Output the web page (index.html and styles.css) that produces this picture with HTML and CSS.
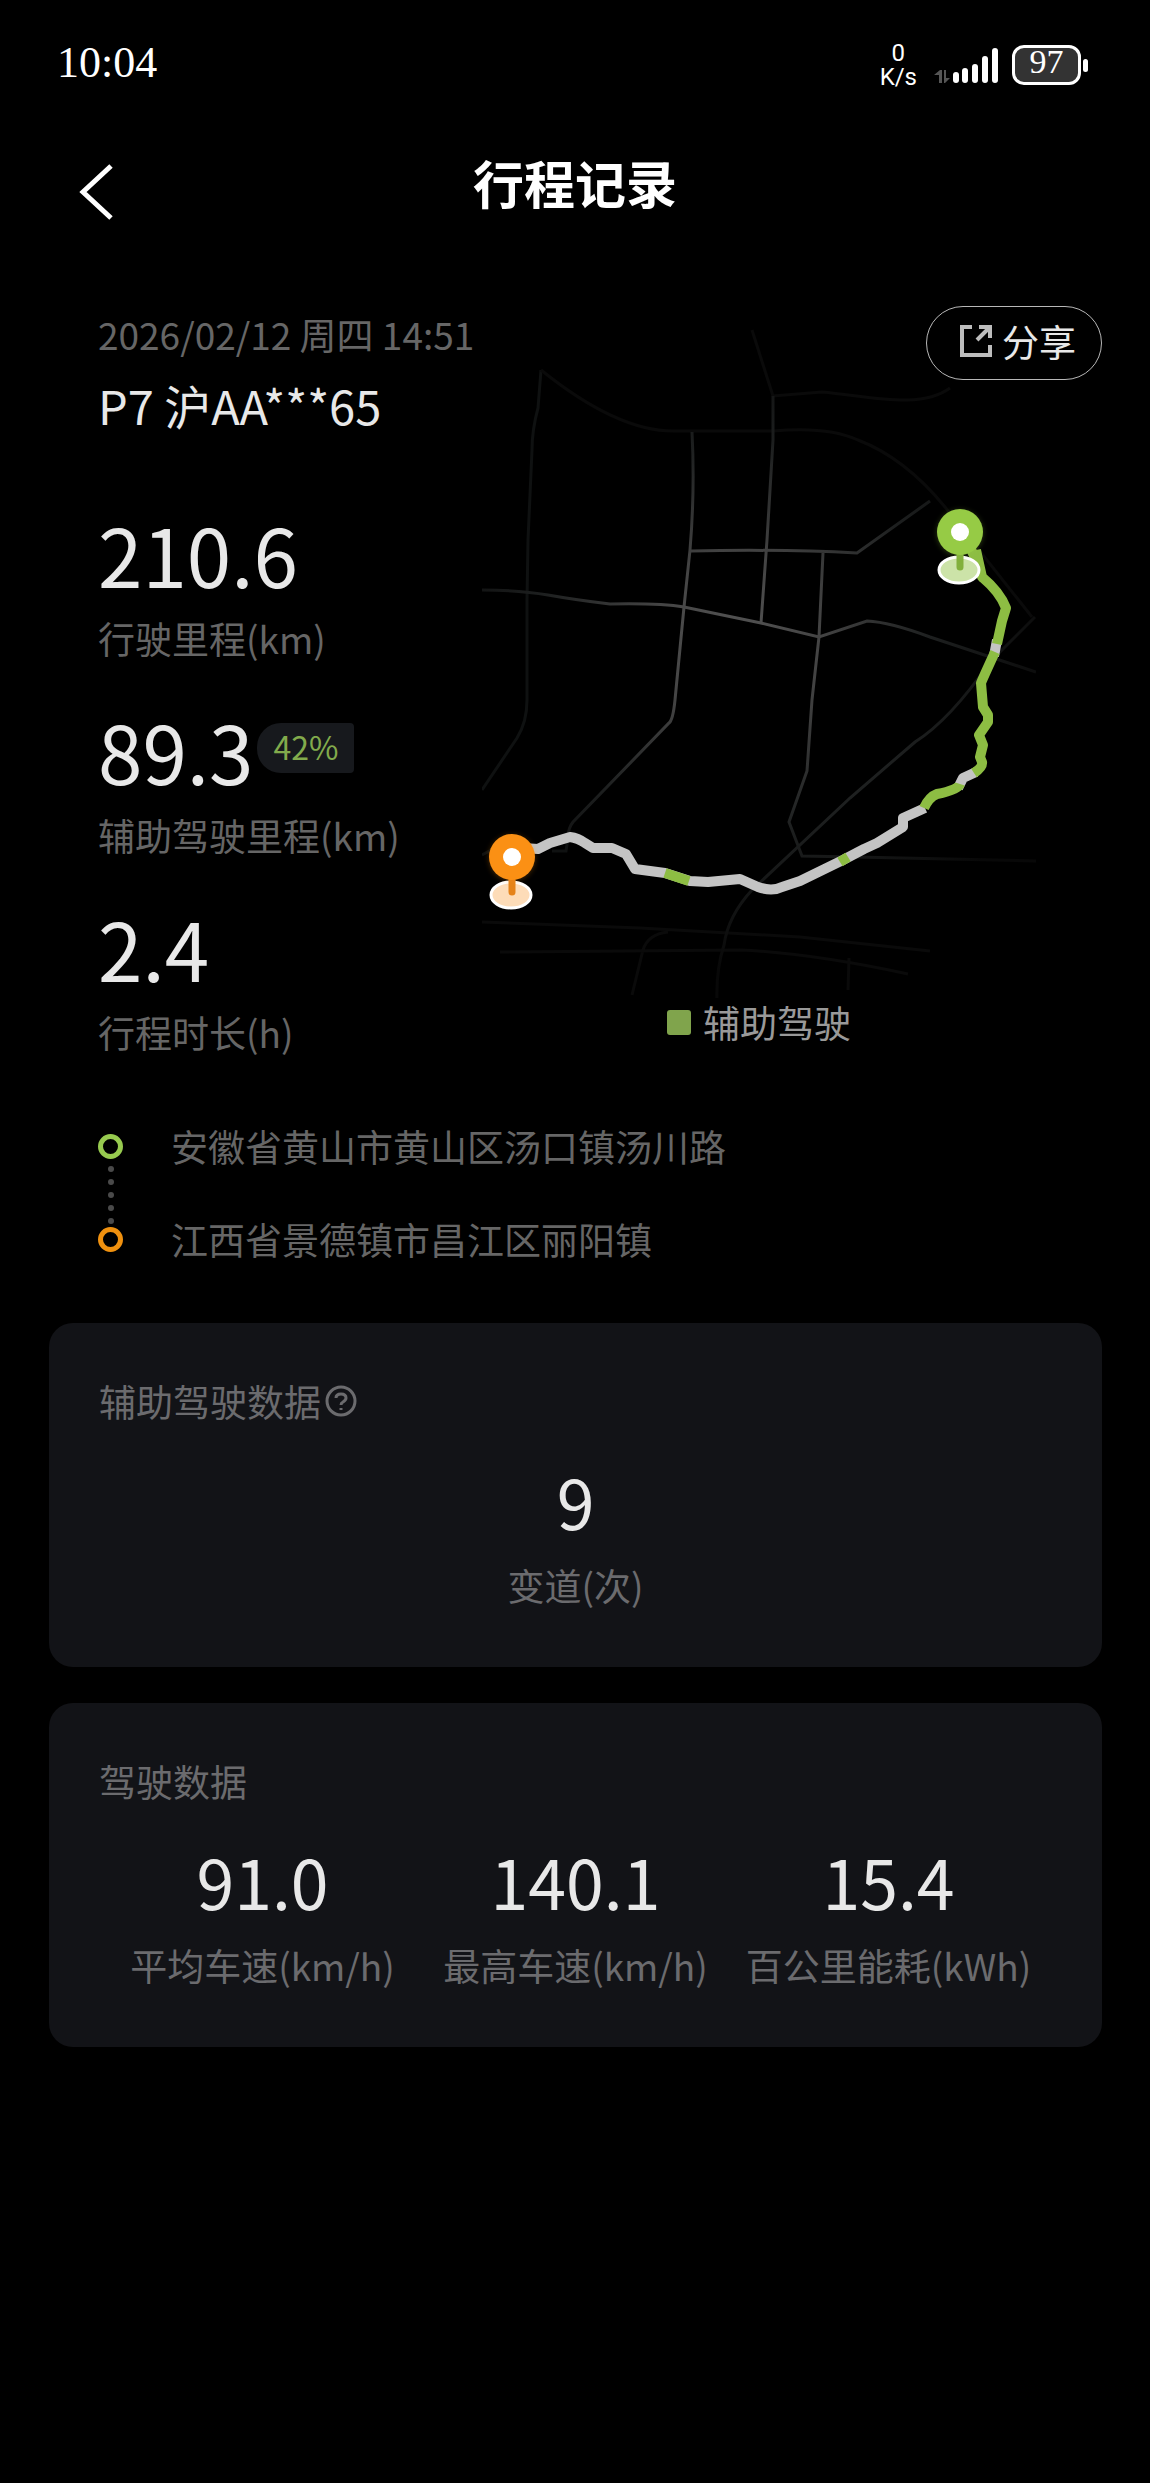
FILE: index.html
```html
<!DOCTYPE html>
<html lang="zh-CN">
<head>
<meta charset="utf-8">
<meta name="viewport" content="width=device-width, initial-scale=1">
<title>行程记录</title>
<link rel="stylesheet" href="styles.css">
</head>
<body>
<div class="statusbar">
  <time class="clock">10:04</time>
  <div class="indicators">
    <div class="speed"><span>0</span><span>K/s</span></div>
    <svg class="signal" viewBox="0 0 66 38" aria-hidden="true">
      <path class="arrows" d="M6 37V29H1L7 24H9V37ZM11 24H13V32H17L12 37H11Z"/>
      <g class="bars">
        <rect x="20" y="26" width="6" height="11" rx="3"/>
        <rect x="29" y="22" width="6" height="15" rx="3"/>
        <rect x="39" y="18" width="6" height="19" rx="3"/>
        <rect x="49" y="10" width="6" height="27" rx="3"/>
        <rect x="59" y="2" width="6" height="35" rx="3"/>
      </g>
    </svg>
    <div class="battery"><span class="level">97</span><span class="nub"></span></div>
  </div>
</div>

<header class="navbar">
  <button class="back" type="button" aria-label="返回">
    <svg viewBox="0 0 36 56" aria-hidden="true"><path d="M33 2L5 28L33 54"/></svg>
  </button>
  <h1>行程记录</h1>
</header>

<main>
  <section class="trip">
    <button class="share" type="button">
      <svg viewBox="0 0 34 34" aria-hidden="true"><path d="M13 3H3V31H31V21M20 3H31V14M31 3L18 16"/></svg>
      <span>分享</span>
    </button>
    <div class="summary">
      <p class="date">2026/02/12 周四 14:51</p>
      <p class="car">P7 沪AA***65</p>
      <dl class="metrics">
        <div class="metric"><dd>210.6</dd><dt>行驶里程(km)</dt></div>
        <div class="metric"><dd>89.3<span class="share-rate">42%</span></dd><dt>辅助驾驶里程(km)</dt></div>
        <div class="metric"><dd>2.4</dd><dt>行程时长(h)</dt></div>
      </dl>
    </div>
    <figure class="map">
      <svg viewBox="482 312 554 686" role="img" aria-label="行程路线">
        <defs>
          <radialGradient id="fade" gradientUnits="userSpaceOnUse" cx="735" cy="640" r="330">
            <stop offset="0" stop-color="#545454"/>
            <stop offset="0.25" stop-color="#444"/>
            <stop offset="0.6" stop-color="#1d1f1f"/>
            <stop offset="1" stop-color="#080808"/>
          </radialGradient>
          <filter id="glow" x="-50%" y="-50%" width="200%" height="200%"><feGaussianBlur stdDeviation="3"/></filter>
        </defs>
        <g class="roads minor">
          <path class="west" d="M541 370L538 408Q532 430 532 450L528 540L527 600V700Q527 722 517 738L482 790"/>
          <path d="M541 370Q618 432 675 431L773 431Q828 426 858 440Q905 458 945 507L1032 617"/>
          <path d="M752 330L773 396L822 392C870 396 920 410 950 388"/>
          <path d="M482 922L640 928L800 937L930 951M500 952L740 950Q810 953 908 974M632 995L643 950Q648 934 668 932M849 958L848 990"/>
          <path class="west" d="M482 855L495 848M552 851H566L568 838"/>
        </g>
        <g class="roads">
          <path d="M692 432Q695 490 690 550L684 607L675 700Q673 720 669 723L573 822Q568 828 568 838"/>
          <path d="M691 551Q780 549 857 553L930 501"/>
          <path d="M773 396V440L767 540L761 623"/>
          <path d="M482 590Q520 590 548 595T610 604Q660 603 684 607L761 623L819 637L867 621Q890 622 930 637L1036 672"/>
          <path d="M823 553L819 637L812 700L807 771L789 822L802 856L855 857L1036 861"/>
          <path d="M1035 617L990 662Q950 720 915 742L850 798L752 890Q728 916 724 945Q716 970 717 1000"/>
        </g>
        <g class="route">
          <path class="manual" d="M523 848L538 849L550 843L570 837Q578 838 585 843L593 848H612L626 854L635 869L665 873L690 881L708 882L740 879L758 887Q772 892 782 887L800 881L843 860L864 849L877 843L903 827V818L925 808M958 788L963 778L976 772M997 640L994 656"/>
          <path class="assist" d="M665 873L689 881M840 862L848 857M924 808Q929 797 937 794Q958 790 960 784M974 773Q983 767 982 762L980 757L983 745L979 735L988 722V715L983 707L981 683Q983 678 995 652M997 644L1002 621L1006 608Q1000 592 982 577L976 550"/>
          <path class="assist wedge" d="M966 550L975 546Q984 565 986 580L980 582Z"/>
        </g>
        <g class="pin start">
          <ellipse class="base" cx="959" cy="570" rx="20" ry="13"/>
          <path class="stem" d="M960 550V567"/>
          <circle class="halo" cx="960" cy="533" r="22" filter="url(#glow)"/>
          <circle class="head" cx="960" cy="532" r="23"/>
          <circle class="eye" cx="960" cy="532" r="9"/>
        </g>
        <g class="pin end">
          <ellipse class="base" cx="511" cy="895" rx="20" ry="13"/>
          <path class="stem" d="M512 875V892"/>
          <circle class="halo" cx="512" cy="858" r="22" filter="url(#glow)"/>
          <circle class="head" cx="512" cy="857" r="23"/>
          <circle class="eye" cx="512" cy="857" r="9"/>
        </g>
      </svg>
      <figcaption>辅助驾驶</figcaption>
    </figure>
  </section>

  <ul class="places">
    <li class="from">安徽省黄山市黄山区汤口镇汤川路</li>
    <li class="dots" aria-hidden="true"><i></i><i></i><i></i><i></i><i></i></li>
    <li class="to">江西省景德镇市昌江区丽阳镇</li>
  </ul>

  <section class="card">
    <h2>辅助驾驶数据
      <button class="help" type="button" aria-label="说明">
        <svg viewBox="0 0 32 32" aria-hidden="true"><circle cx="16" cy="16" r="14"/><path d="M11 13Q11 9 16 9T21 13Q21 15 18 17Q16 18 16 20"/><path d="M16 23V25"/></svg>
      </button>
    </h2>
    <dl class="stats">
      <div><dd>9</dd><dt>变道(次)</dt></div>
    </dl>
  </section>

  <section class="card">
    <h2>驾驶数据</h2>
    <dl class="stats">
      <div><dd>91.0</dd><dt>平均车速(km/h)</dt></div>
      <div><dd>140.1</dd><dt>最高车速(km/h)</dt></div>
      <div><dd>15.4</dd><dt>百公里能耗(kWh)</dt></div>
    </dl>
  </section>
</main>
</body>
</html>
```
FILE: styles.css
```css
*, *::before { box-sizing: border-box; }

body {
  margin: 0;
  min-height: 100vh;
  background: #000;
  color: #e8e8e8;
  font: 400 37px/48px "Noto Sans CJK SC", sans-serif;
}

h1, h2, p, dl, dd, figure, ul { margin: 0; padding: 0; }
li { list-style: none; }

button {
  padding: 0;
  border: 0;
  background: none;
  color: inherit;
  font: inherit;
  cursor: pointer;
}

svg { display: block; fill: none; }

/* Status bar */
.statusbar {
  display: flex;
  align-items: center;
  justify-content: space-between;
  padding: 37px 62px 0 57px;
}
.clock {
  color: #fff;
  font: 400 44px/52px "Liberation Serif", serif;
}
.indicators {
  display: flex;
  align-items: center;
  padding-top: 4px;
}
.speed {
  display: flex;
  flex-direction: column;
  align-items: center;
  margin-right: 16px;
  color: #fff;
  font: 400 24px/24px Roboto, sans-serif;
}
.signal { width: 66px; height: 38px; margin-right: 13px; }
.arrows { fill: #555; }
.bars { fill: #fff; }
.battery { display: flex; align-items: center; gap: 2px; }
.level {
  width: 69px;
  height: 40px;
  border: 3px solid #fff;
  border-radius: 12px;
  background: #333;
  color: #fff;
  font: 400 34px/28px "Liberation Serif", serif;
  text-align: center;
}
.nub { width: 5px; height: 13px; border-radius: 3px; background: #fff; }

/* Title bar */
.navbar {
  display: grid;
  grid-template: 68px / 40px 1fr 40px;
  align-items: start;
  padding: 63px 78px 0;
}
.back { align-self: end; }
.back svg {
  width: 36px;
  height: 56px;
  stroke: #fff;
  stroke-width: 5;
}
h1 {
  color: #fff;
  font-size: 51px;
  font-weight: 700;
  line-height: 60px;
  text-align: center;
}

/* Trip summary */
.trip {
  position: relative;
  display: grid;
  grid-template-columns: minmax(0, 384fr) minmax(0, 554fr);
  margin-top: 92px;
  padding: 0 114px 0 98px;
}
.share {
  position: absolute;
  top: -6px;
  right: 48px;
  display: flex;
  align-items: center;
  gap: 9px;
  height: 74px;
  padding: 0 25px 4px 32px;
  border: 1px solid #b8b8b8;
  border-radius: 37px;
}
.share svg {
  width: 34px;
  height: 34px;
  stroke: #bdbdbd;
  stroke-width: 4;
}
.summary { margin-top: -2px; white-space: nowrap; }
.date { color: #666; }
.car {
  margin-top: 19px;
  font-size: 47px;
  line-height: 56px;
}
.metrics {
  display: grid;
  gap: 48px;
  margin-top: 80px;
}
.metric { display: flex; flex-direction: column; gap: 21px; }
.metric dd {
  display: flex;
  align-items: center;
  font-size: 80px;
  line-height: 80px;
}
dt { color: #666; }
.share-rate {
  height: 50px;
  margin: -4px 0 0 4px;
  padding: 0 16px;
  border-radius: 24px 4px 4px 24px;
  background: #17191d;
  color: #82ab4c;
  font-size: 32px;
  line-height: 46px;
}

/* Route map */
.map svg { width: 100%; height: auto; }
.roads { stroke: url(#fade); stroke-width: 3; }
.minor { stroke: #0a0a0a; }
.west { stroke: #0f1111; }
.route { stroke-width: 10; stroke-linejoin: round; }
.manual { stroke: #c4c4c4; }
.assist { stroke: #8dbd43; }
.wedge { fill: #8dbd43; stroke: none; }
.base { stroke: #fff; stroke-width: 3; }
.stem { stroke-width: 7; stroke-linecap: round; }
.eye { fill: #fff; }
.halo { opacity: 0.4; }
.start .head, .start .halo { fill: #96cb45; }
.start .base { fill: #cce3a8; }
.start .stem { stroke: #82b03c; }
.end .head, .end .halo { fill: #fb9014; }
.end .base { fill: #fddcb8; }
.end .stem { stroke: #e5831a; }
figcaption {
  display: flex;
  align-items: center;
  justify-content: center;
  gap: 12px;
  color: #999;
}
figcaption::before {
  content: "";
  width: 24px;
  height: 25px;
  border-radius: 3px;
  background: #80a44c;
}

/* Departure and destination */
.places {
  display: flex;
  flex-direction: column;
  margin: 66px 98px 0;
  color: #666;
}
.from, .to { display: flex; align-items: center; gap: 48px; }
.from::before, .to::before {
  content: "";
  flex: none;
  width: 25px;
  height: 25px;
  border: 5px solid #97ca4f;
  border-radius: 50%;
}
.to::before { border-color: #f0910f; }
.dots {
  display: flex;
  flex-direction: column;
  align-items: center;
  justify-content: space-between;
  width: 25px;
  height: 58px;
  margin: -4px 0 -9px;
}
.dots i {
  width: 6px;
  height: 6px;
  border-radius: 50%;
  background: #4a4a4a;
}

/* Data cards */
.card {
  margin: 60px 48px 0 49px;
  padding: 54px 50px 58px;
  border-radius: 24px;
  background: #121317;
}
.card + .card { margin-top: 36px; }
h2 {
  display: flex;
  align-items: center;
  gap: 4px;
  color: #6b6b6e;
  font-size: 37px;
  font-weight: 400;
}
.help svg {
  width: 32px;
  height: 32px;
  stroke: #6b6b6e;
  stroke-width: 3;
}
.stats {
  display: grid;
  grid-auto-columns: minmax(0, 1fr);
  grid-auto-flow: column;
  margin: 40px 7px 0;
  text-align: center;
  white-space: nowrap;
}
.stats dd {
  font-size: 68px;
  line-height: 72px;
}
.stats dt { margin-top: 24px; color: #6b6b6e; }
```
